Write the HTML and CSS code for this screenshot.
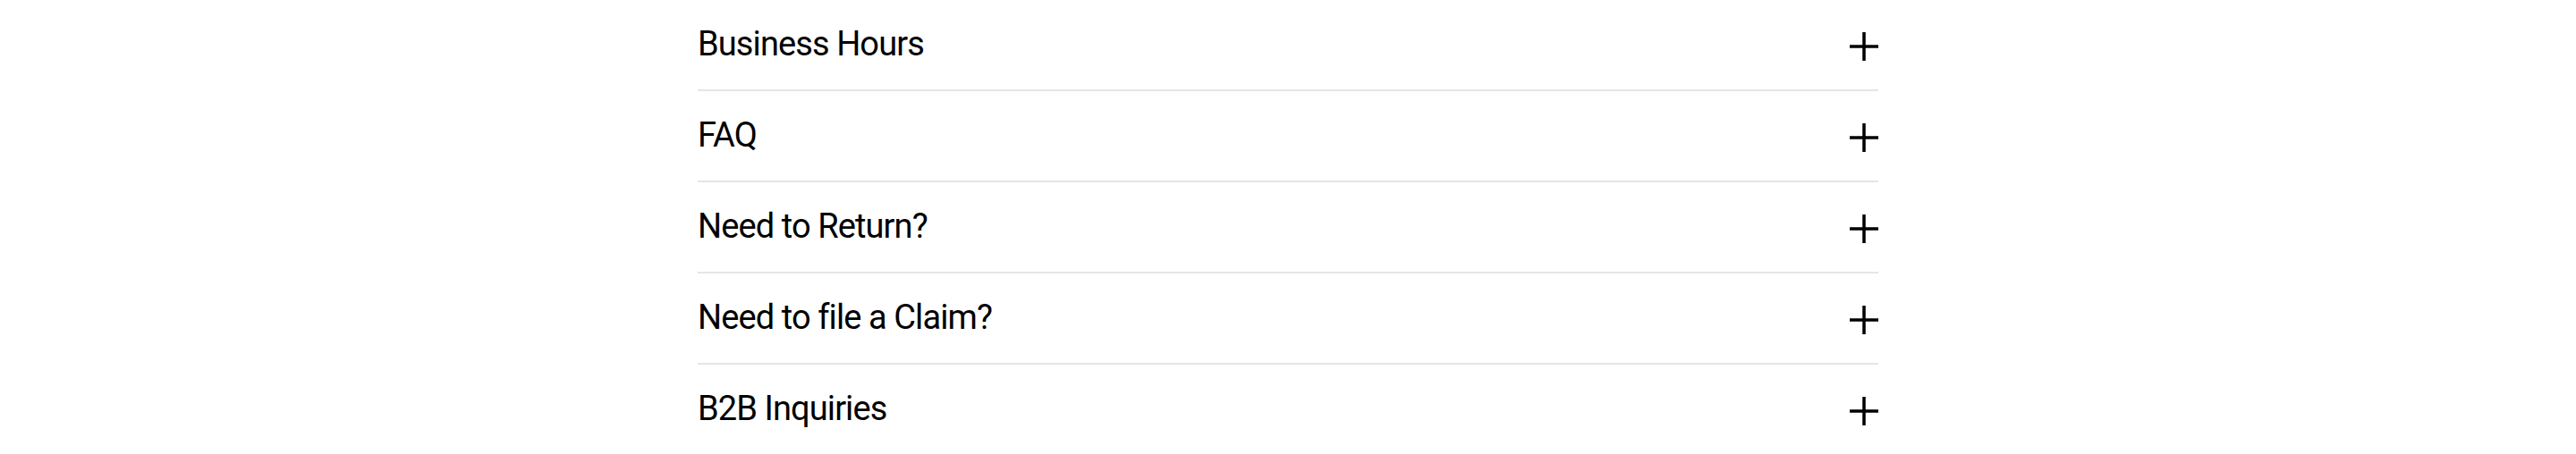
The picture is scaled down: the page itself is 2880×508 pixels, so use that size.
FILE: index.html
```html
<!DOCTYPE html>
<html lang="en">
<head>
<meta charset="utf-8">
<title>Help</title>
<link rel="stylesheet" href="styles.css">
</head>
<body>
<div class="accordion">
  <div class="item">
    <span class="title">Business Hours</span>
    <svg class="plus" viewBox="0 0 32 32" width="32" height="32"><path d="M16 0V32M0 16H32"/></svg>
  </div>
  <div class="item">
    <span class="title">FAQ</span>
    <svg class="plus" viewBox="0 0 32 32" width="32" height="32"><path d="M16 0V32M0 16H32"/></svg>
  </div>
  <div class="item">
    <span class="title">Need to Return?</span>
    <svg class="plus" viewBox="0 0 32 32" width="32" height="32"><path d="M16 0V32M0 16H32"/></svg>
  </div>
  <div class="item">
    <span class="title">Need to file a Claim?</span>
    <svg class="plus" viewBox="0 0 32 32" width="32" height="32"><path d="M16 0V32M0 16H32"/></svg>
  </div>
  <div class="item">
    <span class="title">B2B Inquiries</span>
    <svg class="plus" viewBox="0 0 32 32" width="32" height="32"><path d="M16 0V32M0 16H32"/></svg>
  </div>
</div>
</body>
</html>
```
FILE: styles.css
```css
html, body {
  margin: 0;
  padding: 0;
  background: #ffffff;
}

body {
  font-family: Roboto, "Liberation Sans", Arial, sans-serif;
  color: #000000;
}

.accordion {
  width: 1320px;
  margin: 0 auto;
}

.item {
  display: flex;
  justify-content: space-between;
  align-items: flex-start;
  height: 70px;
  padding-top: 30px;
  border-bottom: 2px solid #e5e5e5;
}

.title {
  font-size: 38px;
  line-height: 38px;
  letter-spacing: -0.9px;
}

.plus {
  margin-top: 6px;
  flex: none;
}

.plus path {
  stroke: #000000;
  stroke-width: 3.5;
  fill: none;
}
```
